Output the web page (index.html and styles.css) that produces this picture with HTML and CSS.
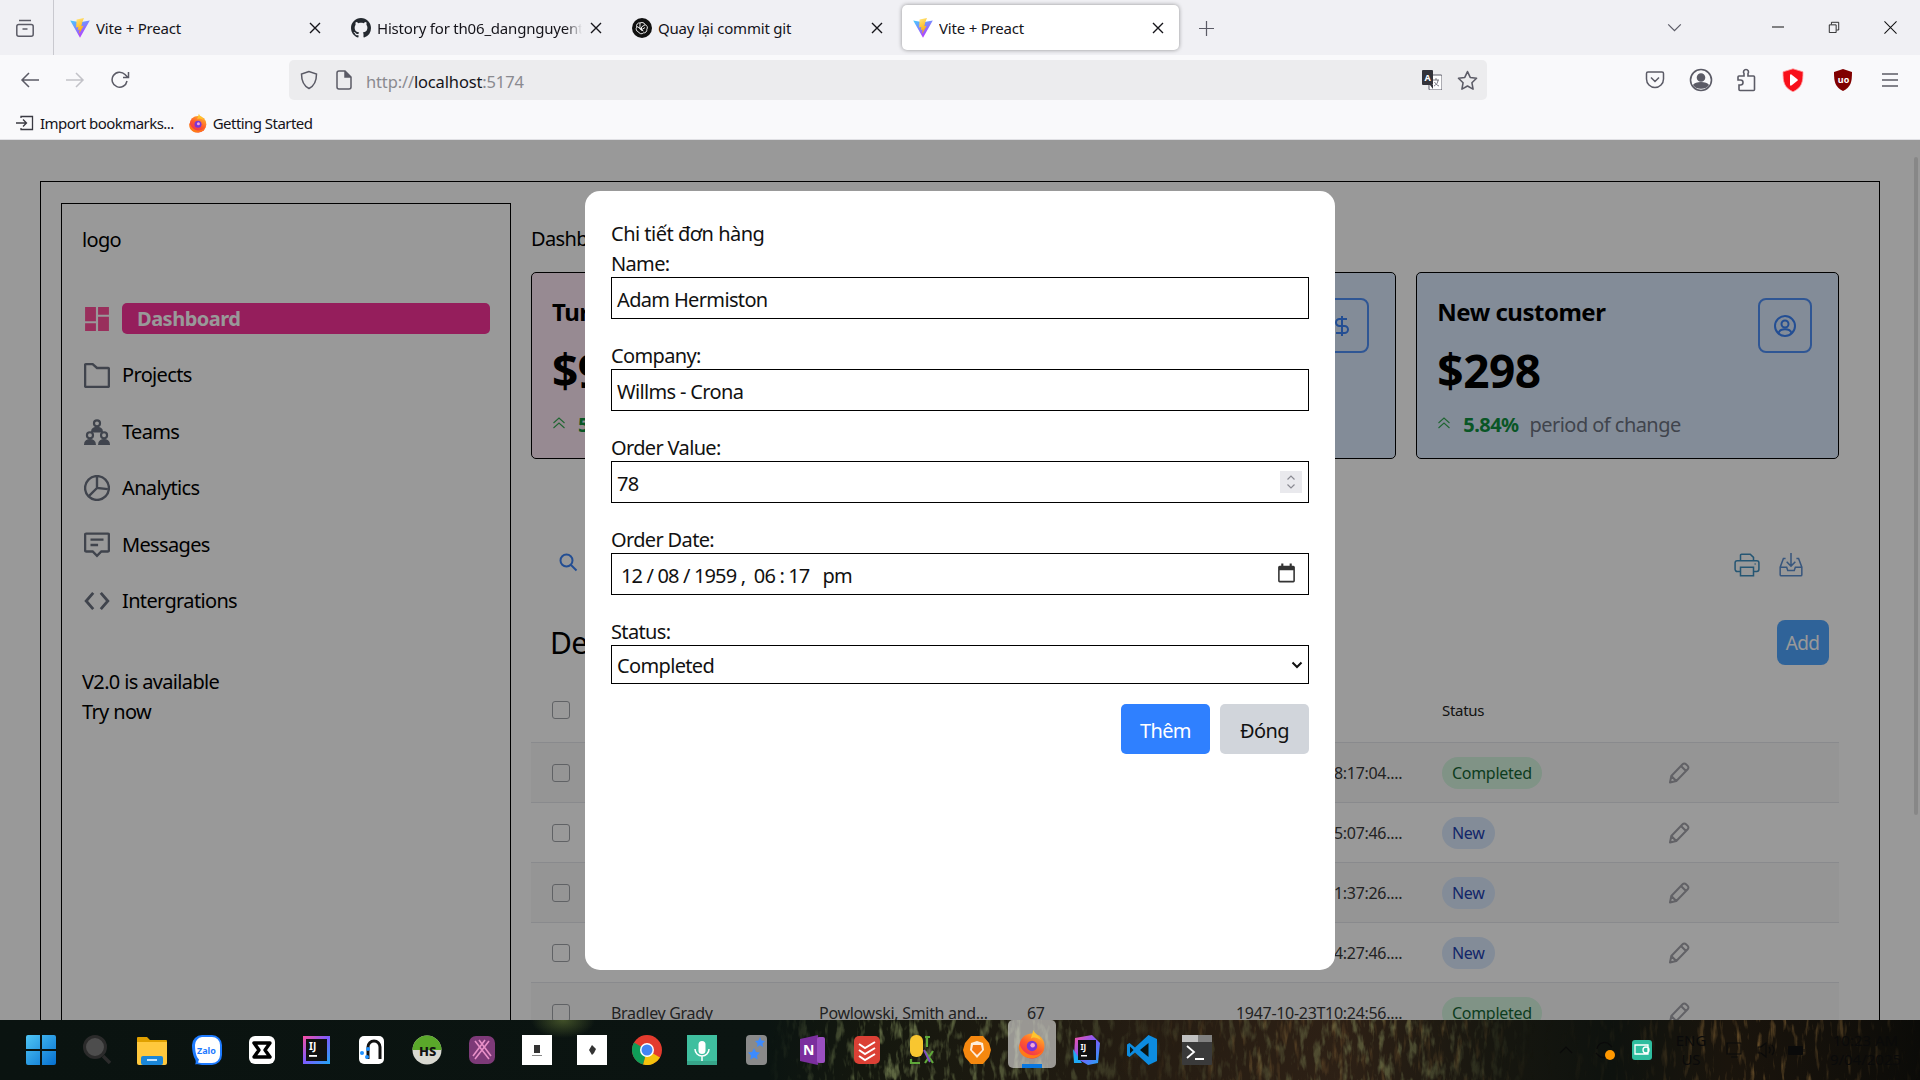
FILE: index.html
```html
<!DOCTYPE html>
<html lang="vi">
<head>
<meta charset="utf-8">
<title>Vite + Preact</title>
<link rel="stylesheet" href="styles.css">
</head>
<body>
<svg class="sprite" aria-hidden="true">
  <defs>
    <linearGradient id="vA" x1="0" y1="0" x2="0.6" y2="1"><stop offset="0" stop-color="#41d1ff"/><stop offset="1" stop-color="#bd34fe"/></linearGradient>
    <linearGradient id="vB" x1="0" y1="0" x2="0.3" y2="1"><stop offset="0" stop-color="#ffea83"/><stop offset="1" stop-color="#ffa800"/></linearGradient>
    <linearGradient id="fx" x1="0.8" y1="0" x2="0.2" y2="1"><stop offset="0" stop-color="#ffbd2e"/><stop offset=".5" stop-color="#ff5a2a"/><stop offset="1" stop-color="#e8206a"/></linearGradient>
    <linearGradient id="win" x1="0" y1="0" x2="1" y2="1"><stop offset="0" stop-color="#4fc6f5"/><stop offset="1" stop-color="#0670d0"/></linearGradient>
    <linearGradient id="ij" x1="0" y1="0" x2="1" y2="1"><stop offset="0" stop-color="#fc4fa0"/><stop offset=".5" stop-color="#7a5cff"/><stop offset="1" stop-color="#1fa9f5"/></linearGradient>
    <symbol id="vite" viewBox="0 0 20 20"><path d="M0.200 2.400 10 19.800 19.800 2.400 10 4.200Z" fill="url(#vA)"/><path d="M14 0 6.600 1.400l-.5 8 2.300-.5-.6 3 2-.4-.8 4.400 4.600-8.200-2.300.5.900-3.600Z" fill="url(#vB)"/></symbol>
    <symbol id="firefox" viewBox="0 0 24 24"><circle cx="12" cy="13.500" r="10" fill="url(#fx)"/><path d="M13 .8c1 3 4.800 4.200 6 8-2.500-2-6-3-8-1 1-3 1.500-5 2-7Z" fill="#ffc42e"/><circle cx="12" cy="13.500" r="4.200" fill="#7a35d8"/><circle cx="12.500" cy="13" r="1.800" fill="#f4a6d8"/><path d="M2 12c2 6 7 9.500 12 9 3-.3 6-2 7.500-5-2 8-13 10-18 4-2-2.500-2.500-5.500-1.500-8Z" fill="#ff7a18"/></symbol>
    <symbol id="pencil" viewBox="0 0 24 24"><path d="M3 21.500l1.300-6.500L15.600 3.200a2.400 2.400 0 0 1 3.400 0l1.700 1.700a2.400 2.400 0 0 1 0 3.400L9.300 20Z M14 5l5 5 M4.300 15l5 5" fill="none" stroke="currentColor" stroke-width="2" stroke-linejoin="round"/></symbol>
    <symbol id="close" viewBox="0 0 12 12"><path d="M1 1l10 10M11 1 1 11" fill="none" stroke="currentColor" stroke-width="1.400"/></symbol>
    <symbol id="dchev" viewBox="0 0 16 16"><path d="M2.500 8 8 3l5.500 5M2.500 13 8 8l5.500 5" fill="none" stroke="currentColor" stroke-width="1.100"/></symbol>
    <filter id="grass" x="0" y="0" width="100%" height="100%"><feTurbulence type="fractalNoise" baseFrequency="0.16 0.035" numOctaves="3" seed="7"/><feColorMatrix values="0 0 0 0 .6  0 0 0 0 .32  0 0 0 0 .08  4 0 0 0 -2.200"/></filter>
    <filter id="grass2" x="0" y="0" width="100%" height="100%"><feTurbulence type="fractalNoise" baseFrequency="0.14 0.05" numOctaves="3" seed="3"/><feColorMatrix values="0 0 0 0 .34  0 0 0 0 .42  0 0 0 0 .16  4 0 0 0 -2"/></filter>
    <linearGradient id="mOrange"><stop offset=".58" stop-color="#000"/><stop offset=".65" stop-color="#3a3a3a"/><stop offset=".76" stop-color="#333"/><stop offset=".8" stop-color="#000"/><stop offset=".86" stop-color="#1a1a1a"/><stop offset=".92" stop-color="#777"/><stop offset=".97" stop-color="#333"/><stop offset="1" stop-color="#0a0a0a"/></linearGradient>
    <linearGradient id="mGreen"><stop offset=".4" stop-color="#000"/><stop offset=".46" stop-color="#888"/><stop offset=".52" stop-color="#666"/><stop offset=".6" stop-color="#1a1a1a"/><stop offset=".72" stop-color="#666"/><stop offset=".76" stop-color="#333"/><stop offset=".8" stop-color="#000"/></linearGradient>
    <mask id="mo"><rect width="1920" height="60" fill="url(#mOrange)"/></mask>
    <mask id="mg"><rect width="1920" height="60" fill="url(#mGreen)"/></mask>
  </defs>
</svg>

<header class="tabbar">
  <div class="view-btn">
    <svg class="i20" viewBox="0 0 20 20" fill="none" stroke="#5b5b66" stroke-width="1.500"><rect x="1.800" y="6.500" width="16.400" height="11.700" rx="2"/><path d="M4 2.500h12M7.500 11h5"/></svg>
  </div>
  <div class="tabs">
    <div class="tab"><svg class="fav"><use href="#vite"/></svg><span class="tab-title">Vite + Preact</span><svg class="tab-x"><use href="#close"/></svg></div>
    <div class="tab"><svg class="fav" viewBox="0 0 16 16"><path fill="#24292f" d="M8 0C3.580 0 0 3.580 0 8c0 3.540 2.290 6.530 5.470 7.590.4.070.55-.17.55-.38 0-.19-.01-.82-.01-1.490-2.010.37-2.530-.49-2.690-.94-.09-.23-.48-.94-.82-1.130-.28-.15-.68-.52-.01-.53.630-.01 1.080.58 1.230.82.720 1.210 1.870.87 2.330.66.070-.52.280-.87.510-1.070-1.780-.2-3.640-.89-3.640-3.950 0-.87.310-1.590.820-2.150-.08-.2-.36-1.020.08-2.120 0 0 .67-.21 2.200.82.640-.18 1.320-.27 2-.27.680 0 1.360.09 2 .27 1.530-1.040 2.200-.82 2.200-.82.440 1.100.160 1.920.080 2.120.510.560.820 1.270.820 2.150 0 3.070-1.870 3.750-3.650 3.950.29.250.54.730.54 1.480 0 1.070-.01 1.930-.01 2.200 0 .21.150.46.550.38A8.013 8.013 0 0 0 16 8c0-4.420-3.580-8-8-8z"/></svg><span class="tab-title tab-fade">History for th06_dangnguyentie</span><svg class="tab-x"><use href="#close"/></svg></div>
    <div class="tab"><svg class="fav" viewBox="0 0 20 20"><circle cx="10" cy="10" r="10" fill="#111"/><path d="M10 4.500a3 3 0 0 1 3 2.200 3 3 0 0 1 1.800 4.700 3 3 0 0 1-3.400 3.500 3 3 0 0 1-4.900-1 3 3 0 0 1-1.700-4.800A3 3 0 0 1 8 4.900Z M8 5l-.1 6 3.500 2 M13 6.800 9.500 9v3.500 M5 8.500l5 3 3-2" fill="none" stroke="#fff" stroke-width=".9"/></svg><span class="tab-title">Quay lại commit git</span><svg class="tab-x"><use href="#close"/></svg></div>
    <div class="tab tab-on"><svg class="fav"><use href="#vite"/></svg><span class="tab-title">Vite + Preact</span><svg class="tab-x"><use href="#close"/></svg></div>
  </div>
  <svg class="plus" viewBox="0 0 16 16"><path d="M8 0v16M0 8h16" stroke="#5b5b66" stroke-width="1.300"/></svg>
  <svg class="all-tabs" viewBox="0 0 16 10"><path d="M1 1.500 8 8.500l7-7" fill="none" stroke="#5b5b66" stroke-width="1.400"/></svg>
  <div class="winctl">
    <svg class="wc" viewBox="0 0 12 12"><path d="M0 6h12" stroke="#111" stroke-width="1"/></svg>
    <svg class="wc" viewBox="0 0 12 14"><path d="M.5 4.500h8v9h-8z M3 4V1.500h8.500v9H9" fill="none" stroke="#111" stroke-width="1"/></svg>
    <svg class="wc" viewBox="0 0 14 14"><path d="M.5.500l13 13M13.500.500l-13 13" stroke="#111" stroke-width="1.100"/></svg>
  </div>
</header>

<nav class="toolbar">
  <div class="nav-group">
    <button class="tool"><svg class="i20" viewBox="0 0 20 20" fill="none" stroke="#5b5b66" stroke-width="1.500"><path d="M19 10H2M9 3l-7 7 7 7"/></svg></button>
    <button class="tool"><svg class="i20" viewBox="0 0 20 20" fill="none" stroke="#c2c2c8" stroke-width="1.500"><path d="M1 10h17M11 3l7 7-7 7"/></svg></button>
    <button class="tool"><svg class="i20 nudge-r" viewBox="0 0 20 20" fill="none" stroke="#5b5b66" stroke-width="1.500"><path d="M16 11a7.500 7.500 0 1 1-2-6.500L17 7.500M17.500 2v5.500H12"/></svg></button>
  </div>
  <div class="urlbar">
    <svg class="u-shield" viewBox="0 0 20 20" fill="none" stroke="#5b5b66" stroke-width="1.500"><path d="M10 1.500 2.500 4c0 7 1.500 11.500 7.500 14.500C16 15.500 17.500 11 17.500 4Z"/></svg>
    <svg class="u-page" viewBox="0 0 16 20" fill="none" stroke="#5b5b66" stroke-width="1.500"><path d="M3 1h6l6 6v10a2 2 0 0 1-2 2H3a2 2 0 0 1-2-2V3a2 2 0 0 1 2-2Z"/><path d="M9 1v6h6" fill="#5b5b66"/></svg>
    <span class="url"><span class="url-dim">http://</span>localhost<span class="url-dim">:5174</span></span>
    <svg class="u-trans" viewBox="0 0 20 20"><rect x="7" y="5" width="13" height="15" rx="1" fill="#fff" stroke="#5b5b66"/><rect x="0" y="0" width="11" height="15" rx="1" fill="#33333a"/><path d="M8 15l3 4v-4z" fill="#33333a"/><text x="2.500" y="11" class="u-a">A</text><path d="M11 10h6M14 8v2M12 16c2-1 4-3 4-6M12.500 12c1 2 3 3.500 4.500 4" fill="none" stroke="#5b5b66" stroke-width=".8"/></svg>
    <svg class="u-star" viewBox="0 0 20 20" fill="none" stroke="#5b5b66" stroke-width="1.500" stroke-linejoin="round"><path d="m10 1.500 2.600 5.600 6 .8-4.400 4.200 1.100 6.100-5.300-3-5.300 3 1.100-6.100L1.400 7.900l6-.8Z"/></svg>
  </div>
  <div class="tool-right">
    <button class="tool"><svg class="i20" viewBox="0 0 20 20" fill="none" stroke="#5b5b66" stroke-width="1.500"><path d="M3 2h14a1.500 1.500 0 0 1 1.500 1.500V9a8.500 8.500 0 0 1-17 0V3.500A1.500 1.500 0 0 1 3 2Z M6 7.500l4 4 4-4"/></svg></button>
    <button class="tool"><svg class="i24" viewBox="0 0 24 24" fill="none" stroke="#5b5b66" stroke-width="1.600"><circle cx="12" cy="12" r="10.500"/><circle cx="12" cy="9.500" r="3.500" fill="#5b5b66"/><path d="M5 17c2-3 12-3 14 0-3 4-11 4-14 0Z" fill="#5b5b66"/></svg></button>
    <button class="tool tool-ext"><svg class="i24" viewBox="0 0 24 24" fill="none" stroke="#5b5b66" stroke-width="1.600"><path d="M12 1.500a2.500 2.500 0 0 1 2 4V8h5.500a1 1 0 0 1 1 1v12.500a1 1 0 0 1-1 1H6a1 1 0 0 1-1-1V17h1.500a2.500 2.500 0 0 0 0-5H4v-3a1 1 0 0 1 1-1h5V5.500a2.500 2.500 0 0 1 2-4Z"/></svg></button>
    <button class="tool"><svg class="i24" viewBox="0 0 24 24"><path d="M12 .8 2 3.800c0 10.500 1 15.700 10 20 9-4.300 10-9.500 10-20Z" fill="#f8101a" stroke="#ff9ea2" stroke-width=".8"/><path d="M9 7.300c0-.8.800-1.200 1.400-.8l6 4.700c.5.400.5 1.200 0 1.600l-6 4.700c-.6.400-1.400 0-1.400-.8Z" fill="#fff"/></svg></button>
    <button class="tool tool-ubo"><svg class="i24" viewBox="0 0 24 24"><path d="M12 1 3 4c0 10 1 15 9 19 8-4 9-9 9-19Z" fill="#800000"/><text x="6.800" y="14.500" class="u-ub">uo</text></svg></button>
    <button class="tool"><svg class="i20" viewBox="0 0 20 20"><path d="M2 4h16M2 10h16M2 16h16" stroke="#5b5b66" stroke-width="1.600"/></svg></button>
  </div>
</nav>

<div class="bookmarks">
  <svg class="bm-ic" viewBox="0 0 18 18" fill="none" stroke="#3a3a42" stroke-width="1.300"><path d="M5 4V2.500h11.500v13H5V14M0 9h10M7 5.500 10.500 9 7 12.500"/></svg>
  <span class="bm-text">Import bookmarks...</span>
  <svg class="bm-fx"><use href="#firefox"/></svg>
  <span class="bm-text">Getting Started</span>
</div>

<div class="viewport">
  <div class="outer">
    <aside class="sidebar">
      <div class="logo">logo</div>
      <ul class="nav">
        <li class="nav-row">
          <span class="nav-ic"><svg class="i26 ic-active" viewBox="0 0 24 24"><path d="M1 1h10v13H1zM13 1h10v7H13zM13 10h10v13H13zM1 16h10v7H1z" fill="currentColor"/></svg></span>
          <span class="nav-pill">Dashboard</span>
        </li>
        <li class="nav-row">
          <span class="nav-ic"><svg class="i26" viewBox="0 0 24 24" fill="none" stroke="currentColor" stroke-width="2.200"><path d="M1 3a1 1 0 0 1 1-1h6l4 3.500h10a1 1 0 0 1 1 1V22a1 1 0 0 1-1 1H2a1 1 0 0 1-1-1Z"/></svg></span>
          <span>Projects</span>
        </li>
        <li class="nav-row">
          <span class="nav-ic"><svg class="i26" viewBox="0 0 24 24" fill="none" stroke="currentColor" stroke-width="2"><circle cx="12" cy="4" r="2.800"/><path d="M7.500 11.500c0-4.500 9-4.500 9 0Z" fill="currentColor"/><circle cx="5.500" cy="15" r="2.800"/><path d="M1 23.500c0-5.500 9-5.500 9 0Z" fill="currentColor"/><circle cx="18.500" cy="15" r="2.800"/><path d="M14 23.500c0-5.500 9-5.500 9 0Z" fill="currentColor"/></svg></span>
          <span>Teams</span>
        </li>
        <li class="nav-row">
          <span class="nav-ic"><svg class="i26" viewBox="0 0 24 24" fill="none" stroke="currentColor" stroke-width="2.200"><circle cx="12" cy="12" r="11"/><path d="M12 1v11l10 1M12 12l-8 8"/></svg></span>
          <span>Analytics</span>
        </li>
        <li class="nav-row">
          <span class="nav-ic"><svg class="i26" viewBox="0 0 24 24" fill="none" stroke="currentColor" stroke-width="2.200"><path d="M2 1.500h20a1 1 0 0 1 1 1V17a1 1 0 0 1-1 1h-6l-4 4-4-4H2a1 1 0 0 1-1-1V2.500a1 1 0 0 1 1-1Z M6 7h12M6 12h7"/></svg></span>
          <span>Messages</span>
        </li>
        <li class="nav-row">
          <span class="nav-ic"><svg class="i26" viewBox="0 0 24 24" fill="none" stroke="currentColor" stroke-width="2.600"><path d="M8.500 4.500 2 12l6.500 7.500M15.500 4.500 22 12l-6.500 7.500"/></svg></span>
          <span>Intergrations</span>
        </li>
      </ul>
      <p class="promo">V2.0 is available<br>Try now</p>
    </aside>

    <main class="main">
      <h2 class="crumb">Dashboard</h2>
      <section class="cards">
        <article class="card card-pink">
          <div class="card-body">
            <h3 class="card-title">Turnover</h3>
            <div class="card-value">$92,405</div>
            <div class="card-delta"><svg class="delta-ic"><use href="#dchev"/></svg><b>5.39%</b><span>period of change</span></div>
          </div>
          <div class="card-box"><svg class="i24" viewBox="0 0 24 24" fill="none" stroke="currentColor" stroke-width="2"><circle cx="9" cy="20" r="1.500"/><circle cx="18" cy="20" r="1.500"/><path d="M2 3h3l3 13h11l2-9H6"/></svg></div>
        </article>
        <article class="card card-blue">
          <div class="card-body">
            <h3 class="card-title">Profit</h3>
            <div class="card-value">$32,218</div>
            <div class="card-delta"><svg class="delta-ic"><use href="#dchev"/></svg><b>5.39%</b><span>period of change</span></div>
          </div>
          <div class="card-box"><svg class="i24" viewBox="0 0 24 24" fill="none" stroke="currentColor" stroke-width="2"><path d="M12 2v20M17 5H9.500a3.500 3.500 0 0 0 0 7h5a3.500 3.500 0 0 1 0 7H6"/></svg></div>
        </article>
        <article class="card card-blue">
          <div class="card-body">
            <h3 class="card-title">New customer</h3>
            <div class="card-value">$298</div>
            <div class="card-delta"><svg class="delta-ic"><use href="#dchev"/></svg><b>5.84%</b><span>period of change</span></div>
          </div>
          <div class="card-box"><svg class="i24" viewBox="0 0 24 24" fill="none" stroke="currentColor" stroke-width="2"><circle cx="12" cy="12" r="10"/><circle cx="12" cy="10" r="3.500"/><path d="M5.500 19c1.500-5 11.500-5 13 0"/></svg></div>
        </article>
      </section>

      <div class="filter-row">
        <svg class="i20 ic-blue ic-search" viewBox="0 0 20 20" fill="none" stroke="currentColor" stroke-width="2"><circle cx="8.500" cy="8.500" r="6"/><path d="m13 13 5.500 5.500"/></svg>
        <div class="filter-actions">
          <svg class="i26 ic-teal" viewBox="0 0 24 24" fill="none" stroke="currentColor" stroke-width="1.400"><path d="M6 8V3a1 1 0 0 1 1-1h8l3 3v3M6 18H3a2 2 0 0 1-2-2v-6a2 2 0 0 1 2-2h18a2 2 0 0 1 2 2v6a2 2 0 0 1-2 2h-3M6 14h12v8H6zM19 11h1"/></svg>
          <svg class="i26 ic-blue2" viewBox="0 0 24 24" fill="none" stroke="currentColor" stroke-width="1.400"><path d="M12 1v12M8 9l4 4 4-4M7 6H5l-3 8v7a1 1 0 0 0 1 1h18a1 1 0 0 0 1-1v-7l-3-8h-2M2 14h6l1 3h6l1-3h6"/></svg>
        </div>
      </div>

      <div class="section-head">
        <h2 class="section-title">Detailed report</h2>
        <button class="add-btn">Add</button>
      </div>

      <div class="table">
        <div class="tr thead"><span><input class="chk" type="checkbox"></span><span>Customer name</span><span>Company</span><span>Order value</span><span>Order date</span><span>Status</span><span></span></div>
        <div class="tr"><span><input class="chk" type="checkbox"></span><span>Adam Hermiston</span><span>Willms - Crona</span><span>78</span><span>1959-12-08T18:17:04....</span><span><em class="badge badge-done">Completed</em></span><svg class="pen"><use href="#pencil"/></svg></div>
        <div class="tr"><span><input class="chk" type="checkbox"></span><span>Ana Kirlin</span><span>Hahn Group</span><span>45</span><span>1982-04-17T15:07:46....</span><span><em class="badge badge-new">New</em></span><svg class="pen"><use href="#pencil"/></svg></div>
        <div class="tr"><span><input class="chk" type="checkbox"></span><span>Lela Beier</span><span>Bode LLC</span><span>92</span><span>2001-09-30T11:37:26....</span><span><em class="badge badge-new">New</em></span><svg class="pen"><use href="#pencil"/></svg></div>
        <div class="tr"><span><input class="chk" type="checkbox"></span><span>Mario Runte</span><span>Kutch Inc</span><span>31</span><span>1975-06-11T04:27:46....</span><span><em class="badge badge-new">New</em></span><svg class="pen"><use href="#pencil"/></svg></div>
        <div class="tr"><span><input class="chk" type="checkbox"></span><span>Bradley Grady</span><span>Powlowski, Smith and...</span><span>67</span><span>1947-10-23T10:24:56....</span><span><em class="badge badge-done">Completed</em></span><svg class="pen"><use href="#pencil"/></svg></div>
      </div>
    </main>
  </div>
  <div class="scroll-thumb"></div>

  <div class="overlay">
    <form class="modal">
      <div class="modal-title">Chi tiết đơn hàng</div>
      <div class="group"><div class="lbl">Name:</div><div class="field">Adam Hermiston</div></div>
      <div class="group"><div class="lbl">Company:</div><div class="field">Willms - Crona</div></div>
      <div class="group"><div class="lbl">Order Value:</div><div class="field field-num">78<span class="spin"><svg viewBox="0 0 12 18" fill="none" stroke="#8a8a92" stroke-width="1.200"><path d="M2.500 6.500 6 3l3.500 3.500M2.500 11.500 6 15l3.500-3.500"/></svg></span></div></div>
      <div class="group"><div class="lbl">Order Date:</div><div class="field field-date"><span class="date-parts">12 / 08 / 1959 ,&nbsp; 06 : 17 &nbsp; pm</span><svg class="cal" viewBox="0 0 20 20"><path d="M2 4a1.500 1.500 0 0 1 1.500-1.500H5V.5h2v2h6V.5h2v2h1.500A1.500 1.500 0 0 1 18 4v13a1.500 1.500 0 0 1-1.500 1.500h-13A1.500 1.500 0 0 1 2 17Z M3.500 7v10h13V7Z" fill="#333" fill-rule="evenodd"/></svg></div></div>
      <div class="group"><div class="lbl">Status:</div><div class="field field-select">Completed<svg class="sel-chev" viewBox="0 0 12 8"><path d="M1.500 1.500 6 6l4.500-4.500" fill="none" stroke="#111" stroke-width="2"/></svg></div></div>
      <div class="actions"><button type="button" class="btn btn-primary">Thêm</button><button type="button" class="btn btn-muted">Đóng</button></div>
    </form>
  </div>
</div>

<footer class="taskbar">
  <svg class="wall" width="1920" height="60" aria-hidden="true"><rect width="1920" height="60" fill="#fff" filter="url(#grass)" mask="url(#mo)"/><rect width="1920" height="60" fill="#fff" filter="url(#grass2)" mask="url(#mg)"/></svg>
  <div class="apps">
    <div class="app app-first"><svg class="app-ic" viewBox="0 0 30 30"><path d="M0 2a2 2 0 0 1 2-2h12v14H0ZM16 0h12a2 2 0 0 1 2 2v12H16ZM0 16h14v14H2a2 2 0 0 1-2-2ZM16 16h14v12a2 2 0 0 1-2 2H16Z" fill="url(#win)"/></svg></div>
    <div class="app"><svg class="app-ic" viewBox="0 0 30 30"><circle cx="13" cy="12" r="10.500" fill="#4d4d4d" stroke="#2b2b2b" stroke-width="3"/><path d="M21 21l7 7" stroke="#2b2b2b" stroke-width="3.500"/></svg></div>
    <div class="app"><svg class="app-ic" viewBox="0 0 30 30"><path d="M0 3a1 1 0 0 1 1-1h9l3 3h16a1 1 0 0 1 1 1v5H0Z" fill="#e0a000"/><path d="M0 7h30v21a2 2 0 0 1-2 2H2a2 2 0 0 1-2-2Z" fill="#ffc83d"/><rect x="4" y="21" width="22" height="9" rx="2" fill="#1a86d8"/><rect x="10" y="24" width="10" height="2" fill="#bfe3ff"/></svg></div>
    <div class="app"><svg class="app-ic" viewBox="0 0 30 30"><path d="M10 0h10a10 10 0 0 1 10 10v10a10 10 0 0 1-10 10H10c-2 0-5-1-7-.5C4 28 4 26 3 24 1 21 0 15 0 10A10 10 0 0 1 10 0Z" fill="#1e7bff"/><path d="M10 2h10a8 8 0 0 1 8 8v10a8 8 0 0 1-8 8H9c-1 0-2-.5-3-.5l1-3C4 22 3 15 3 10a8 8 0 0 1 7-8Z" fill="#fff"/><text x="5" y="19" class="app-t app-zalo">Zalo</text></svg></div>
    <div class="app"><svg class="app-ic" viewBox="0 0 30 30"><rect x="2" y="1" width="26" height="28" rx="6" fill="#fff"/><path d="M7 8h16l-5 7 5 7H7l5-7Z" fill="none" stroke="#000" stroke-width="3.400" stroke-linejoin="round"/></svg></div>
    <div class="app"><svg class="app-ic" viewBox="0 0 30 30"><rect x="1" y="1" width="27" height="28" fill="url(#ij)"/><rect x="4" y="4" width="21" height="22" fill="#111"/><text x="7" y="15" class="app-t app-ij">IJ</text><rect x="7" y="20" width="8" height="1.800" fill="#fff"/></svg></div>
    <div class="app"><svg class="app-ic" viewBox="0 0 30 30"><rect x="2" y="1" width="25" height="28" rx="5" fill="#fff"/><path d="M11 24V12a6 6 0 0 1 12 0v12" fill="none" stroke="#111" stroke-width="3"/><circle cx="5" cy="18" r="2" fill="#1e90ff"/><circle cx="11" cy="14" r="2" fill="#1e90ff"/><circle cx="10" cy="22" r="2" fill="#1e90ff"/></svg></div>
    <div class="app"><svg class="app-ic" viewBox="0 0 30 30"><circle cx="15" cy="15" r="14.500" fill="#d8d8d0"/><path d="M.5 15a14.500 14.500 0 0 1 29 0Z" fill="#5aa82a"/><text x="7" y="21" class="app-t app-hs">HS</text></svg></div>
    <div class="app"><svg class="app-ic" viewBox="0 0 30 30"><rect x="2" y="1" width="26" height="28" rx="7" fill="#7d3a78"/><path d="M8 6l14 18M12 5l12 16M22 6 8 24M18 5 6 21" stroke="#e890c8" stroke-width="1.600"/></svg></div>
    <div class="app"><svg class="app-ic" viewBox="0 0 30 30"><rect width="30" height="30" fill="#fff"/><path d="M12 10h6v8h-6z" fill="#333"/><rect x="10" y="20" width="10" height="1" fill="#888"/></svg></div>
    <div class="app"><svg class="app-ic" viewBox="0 0 30 30"><rect width="30" height="30" fill="#fff"/><path d="M15 10l4 4-2 4-2 2-3-5z" fill="#333"/></svg></div>
    <div class="app"><svg class="app-ic" viewBox="0 0 30 30"><circle cx="15" cy="15" r="15" fill="#e33b2e"/><path d="M15 15 28 22.500A15 15 0 0 1 11 29.500Z" fill="#f4c20d"/><path d="M15 15 11 29.500A15 15 0 0 1 2 7.500Z" fill="#0f9d58"/><circle cx="15" cy="15" r="7" fill="#fff"/><circle cx="15" cy="15" r="5.500" fill="#4285f4"/></svg></div>
    <div class="app"><svg class="app-ic" viewBox="0 0 30 30"><rect x="0" y="0" width="30" height="30" fill="#3fbf9f"/><rect x="11.500" y="6" width="7" height="13" rx="3.500" fill="#fff"/><path d="M8 14a7 7 0 0 0 14 0M15 21v5" fill="none" stroke="#fff" stroke-width="1.500"/><rect y="26" width="30" height="4" fill="#37a58a"/></svg></div>
    <div class="app"><svg class="app-ic" viewBox="0 0 30 30"><rect x="4" y="0" width="21" height="30" rx="4" fill="#8a8a8a"/><path d="M18 2l1.500 3.500 3.500.5-2.500 2.500.5 3.500-3-1.800-3 1.800.5-3.500L13 6l3.500-.5ZM12 13l2 4 4 .5-3 3 .7 4-3.700-2-3.700 2 .7-4-3-3 4-.5Z" fill="#3d8bfd"/></svg></div>
    <div class="app"><svg class="app-ic" viewBox="0 0 30 30"><path d="M3 4l18-4v30L3 26Z" fill="#7b2f9e"/><rect x="20" y="2" width="8" height="26" rx="2" fill="#9a4fc0"/><text x="6" y="20" class="app-t app-n">N</text></svg></div>
    <div class="app"><svg class="app-ic" viewBox="0 0 30 30"><rect x="2" y="1" width="26" height="28" rx="5" fill="#db4035"/><path d="M7 9l6 4 10-6M7 15l6 4 10-6M7 21l6 4 10-6" fill="none" stroke="#fff" stroke-width="2"/></svg></div>
    <div class="app"><svg class="app-ic" viewBox="0 0 30 30"><rect x="3" y="0" width="13" height="22" rx="6" fill="#f8c630"/><path d="M18 2h5M20 2v10M4 24v4h9M18 16l8 12M26 16l-8 12" stroke="#5fa83a" stroke-width="2.200" fill="none"/><path d="M17 15l6 12" stroke="#8050c0" stroke-width="2"/></svg></div>
    <div class="app"><svg class="app-ic" viewBox="0 0 30 30"><path d="M9 1h12l6 7 2 7-2 7-6 7H9l-6-7-2-7 2-7Z" fill="#f5880f"/><path d="M9 8l6-2 6 2 1 7-7 8-7-8Z" fill="#fff" opacity=".85"/><path d="M11 10h8l1 5-5 5-5-5Z" fill="#f5780f"/></svg></div>
    <div class="app app-on"><svg class="app-ic"><use href="#firefox"/></svg></div>
    <div class="app"><svg class="app-ic" viewBox="0 0 30 30"><path d="M3 3 20 0l8 8-2 20-10 2L2 22Z" fill="url(#ij)"/><path d="M1 14 10 28H2Z" fill="#1fa9f5"/><rect x="6" y="5" width="18" height="20" fill="#111"/><text x="8.500" y="15" class="app-t app-ij2">IJ</text><rect x="9" y="20" width="6" height="1.500" fill="#fff"/></svg></div>
    <div class="app"><svg class="app-ic" viewBox="0 0 30 30"><path d="M21.500 0 30 4v22l-8.500 4L8 17.500 2.500 22 0 20.500V9.500L2.500 8 8 12.500Z" fill="#0d8ce0"/><path d="M21.500 8 13 15l8.500 7Z" fill="#0b1512"/><path d="M3 11.500 6.500 15 3 18.500Z" fill="#0b1512"/></svg></div>
    <div class="app"><svg class="app-ic" viewBox="0 0 30 30"><rect x="0" y="0" width="30" height="30" rx="1" fill="#3a3a3a"/><rect width="30" height="7" fill="#c0c0c0"/><rect x="16" width="14" height="7" fill="#808080"/><path d="M5 11l7 6-7 6" fill="none" stroke="#fff" stroke-width="1.800"/><rect x="13" y="23" width="9" height="2" fill="#fff"/></svg></div>
  </div>
  <div class="tray">
    <span class="tray-item"><svg class="i14" viewBox="0 0 14 10"><path d="M1 8l6-6 6 6" fill="none" stroke="#0a0a0a" stroke-width="1.200"/></svg></span>
    <span class="tray-item tray-sync"><svg class="i20" viewBox="0 0 20 20" fill="none" stroke="#0a0a0a" stroke-width="1.200"><path d="M3 9a7.500 7.500 0 0 1 13-4l2 2M17 11a7.500 7.500 0 0 1-13 4l-2-2"/></svg><i class="tray-dot"></i></span>
    <span class="tray-item"><svg class="i20" viewBox="0 0 20 20"><rect width="20" height="20" rx="3" fill="#2ebd9f"/><path d="M3 5h13v9H3z M11 10a3 3 0 1 0 6 0 3 3 0 1 0-6 0" fill="none" stroke="#fff" stroke-width="1.300"/></svg></span>
    <span class="tray-lang">ENG<br>US</span>
    <span class="tray-sys"><svg class="i20" viewBox="0 0 20 20" fill="none" stroke="#0a0a0a" stroke-width="1.100"><path d="M1 3h14v11H1zM5 17h7"/></svg></span>
    <span class="tray-sys"><svg class="i20" viewBox="0 0 20 20" fill="none" stroke="#0a0a0a" stroke-width="1.100"><path d="M2 7h3l5-4v14l-5-4H2zM13 7c1.500 1.500 1.500 4.500 0 6M16 5c2.500 3 2.500 7 0 10"/></svg></span>
    <span class="tray-sys"><svg class="i20" viewBox="0 0 20 20"><rect x="2" y="6" width="15" height="9" rx="1" fill="#0a0a0a"/><path d="M18 9v3" stroke="#0a0a0a"/></svg></span>
    <span class="tray-clock">10:23 AM<br>9/04/2025</span>
  </div>
</footer>
</body>
</html>
```

FILE: styles.css
```css
* { box-sizing: border-box; }
html, body { margin: 0; height: 100%; }
body {
  display: flex;
  flex-direction: column;
  height: 1080px;
  overflow: hidden;
  font-family: "Noto Sans", "Open Sans", sans-serif;
  font-size: 20px;
  letter-spacing: -0.65px;
  color: #000;
  background: #fff;
}
.sprite { position: absolute; width: 0; height: 0; }
button { font: inherit; letter-spacing: inherit; border: 0; background: none; padding: 0; }
svg { display: block; flex: none; }
.i14 { width: 14px; height: 10px; }
.i20 { width: 20px; height: 20px; }
.i24 { width: 24px; height: 24px; }
.i26 { width: 26px; height: 26px; }

/* browser tab strip */
.tabbar { height: 55px; flex: none; display: flex; align-items: center; background: #f0f0f4; }
.view-btn { width: 54px; height: 55px; flex: none; display: flex; align-items: center; padding-left: 15px; border-right: 1px solid #c9c9cf; }
.tabs { display: flex; gap: 4px; margin-left: 5px; }
.tab { width: 277px; height: 45px; display: flex; align-items: center; padding: 0 15px 0 11px; border-radius: 5px; font-size: 15px; letter-spacing: -0.2px; color: #15141a; }
.tab-on { background: #fff; box-shadow: 0 0 4px rgba(0, 0, 0, .4); }
.fav { width: 20px; height: 20px; margin-right: 6px; }
.tab-title { flex: 1; white-space: nowrap; overflow: hidden; }
.tab-fade { -webkit-mask-image: linear-gradient(90deg, #000 92%, transparent); mask-image: linear-gradient(90deg, #000 92%, transparent); }
.tab-x { width: 12px; height: 12px; margin-left: 8px; color: #15141a; }
.plus { width: 15px; height: 15px; margin-left: 20px; margin-top: 2px; }
.all-tabs { width: 15px; height: 9px; margin-left: 452.5px; }
.winctl { display: flex; margin-left: auto; padding-right: 7px; }
.wc { width: 12px; height: 12px; margin: 0 25px 0 19px; }
.winctl .wc:last-child { width: 13px; height: 13px; margin-right: 16px; }

/* toolbar */
.toolbar { height: 50px; flex: none; display: flex; align-items: center; padding-left: 7.5px; background: #f9f9fb; }
.nav-group { display: flex; }
.tool { width: 46px; height: 40px; flex: none; display: flex; align-items: center; justify-content: center; }
.nav-group .tool { width: 45px; }
.nudge-r { margin-left: 2px; }
.tool-ext { padding-right: 3px; }
.tool-ubo { margin-left: 4px; }
.urlbar { width: 1198px; height: 40px; margin-left: 146.5px; flex: none; display: flex; align-items: center; padding: 0 9px 0 10px; background: #ececee; border-radius: 5px; }
.u-shield { width: 20px; height: 20px; }
.u-page { width: 16px; height: 20px; margin-left: 17px; }
.url { font-size: 16.5px; letter-spacing: -0.15px; margin-left: 14px; padding-top: 2px; color: #15141a; flex: 1; }
.url-dim { color: #8a8a90; }
.u-trans { width: 20px; height: 20px; margin-right: 15px; }
.u-a { font-size: 9px; font-weight: 700; fill: #fff; letter-spacing: 0; }
.u-star { width: 21px; height: 21px; }
.tool-right { display: flex; margin-left: 145px; }
.tool-right .tool:last-child { padding-left: 1px; }
.u-ub { font-size: 9px; font-weight: 700; fill: #fff; letter-spacing: 0; }

/* bookmarks */
.bookmarks { height: 35px; flex: none; display: flex; align-items: center; padding: 1px 0 0 16px; gap: 4px; background: #f9f9fb; font-size: 15px; letter-spacing: -0.55px; color: #15141a; border-bottom: 1px solid #e0e0e4; }
.bm-ic { width: 18px; height: 18px; margin-right: 2px; }
.bm-text { margin-right: 10px; white-space: nowrap; }
.bm-fx { width: 20px; height: 20px; margin-right: 1px; }

/* page */
.viewport { flex: 1; min-height: 0; position: relative; overflow: hidden; background: #fff; }
.outer { margin: 41px 0 0 40px; width: 1840px; min-height: 1000px; padding: 21px 40px 21px 20px; border: 1px solid #000; display: flex; gap: 20px; }
.sidebar { width: 450px; flex: none; padding: 21px 20px 0; border: 1px solid #000; line-height: 30px; }
.logo { height: 30px; }
.nav { list-style: none; margin: 48px 0 0; padding: 0; display: flex; flex-direction: column; gap: 25.5px; }
.nav-row { height: 31px; display: flex; align-items: center; gap: 10px; }
.nav-ic { width: 30px; flex: none; display: flex; justify-content: center; color: #6b7280; }
.ic-active { color: #ff4f9a; }
.nav-pill { flex: 1; height: 31px; line-height: 32px; padding-left: 15px; border-radius: 5px; background: #f83299; color: #fff; font-weight: 700; letter-spacing: -0.5px; }
.promo { margin: 50px 0 0; }

.main { flex: 1; min-width: 0; }
.crumb { margin: 21px 0 0; font-size: 20px; font-weight: 400; line-height: 30px; }
.cards { display: grid; grid-template-columns: repeat(3, 1fr); gap: 20px; margin-top: 18px; }
.card { height: 187px; display: flex; padding: 22px 26px 0 20px; border: 1px solid #000; border-radius: 5px; }
.card-pink { background: #fce7f3; }
.card-blue { background: #dbeafe; }
.card-body { flex: 1; min-width: 0; }
.card-title { margin: 0; font-size: 24px; font-weight: 700; line-height: 34px; letter-spacing: -0.5px; }
.card-value { margin-top: 11px; font-size: 46px; font-weight: 700; line-height: 60px; letter-spacing: -0.5px; }
.card-delta { margin-top: 10px; display: flex; align-items: center; height: 28px; font-size: 20px; letter-spacing: -0.55px; color: #6b7280; }
.delta-ic { width: 16px; height: 16px; margin: -2px 11px 0 -1px; color: #34a853; }
.card-delta b { color: #0f8f3f; margin-right: 11px; }
.card-box { width: 54px; height: 55px; margin-top: 3px; flex: none; display: flex; align-items: center; justify-content: center; border: 2px solid #4f8ff7; border-radius: 8px; color: #3b82f6; }

.filter-row { height: 40px; margin-top: 85px; display: flex; align-items: center; justify-content: space-between; padding: 0 35px 0 27px; }
.filter-actions { display: flex; gap: 18px; margin-top: 2px; }
.ic-search { margin-top: -4px; }
.ic-blue { color: #3b82f6; }
.ic-teal { color: #3f8fc0; }
.ic-blue2 { color: #5d8fd0; }
.section-head { margin-top: 36px; height: 45px; display: flex; align-items: center; justify-content: space-between; padding: 0 10.5px 0 19px; }
.section-title { margin: 0; font-size: 30px; font-weight: 400; line-height: 45px; white-space: nowrap; }
.add-btn { width: 52px; height: 45px; border-radius: 8px; background: #4fa6ff; color: #fff; font-size: 19px; }

.table { margin-top: 16px; font-size: 16px; letter-spacing: -0.3px; color: #3a3a3a; }
.tr { height: 60px; display: grid; grid-template-columns: 80px 208px 208px 209px 206px 226px 1fr; align-items: center; border-bottom: 1px solid #e5e7eb; white-space: nowrap; }
.tr:nth-child(even) { background: #f9f9f9; }
.thead { height: 62px; padding-bottom: 3px; color: #222; font-size: 15px; }
.chk { appearance: none; display: block; width: 18px; height: 18px; margin: 0 0 0 21px; background: transparent; border: 1.500px solid #a0a3a8; border-radius: 3px; }
.badge { display: inline-block; height: 32px; line-height: 32px; padding: 0 10px; border-radius: 16px; font-style: normal; font-size: 16px; }
.badge-done { background: #d5f5e0; color: #166534; }
.badge-new { background: #dbeafe; color: #1e40af; }
.pen { width: 24px; height: 24px; margin-left: -1px; color: #a3a3ab; }

.scroll-thumb { position: absolute; right: 2px; top: 17px; width: 4px; height: 658px; border-radius: 2px; background: #e2e2e2; }

/* dialog */
.overlay { position: absolute; inset: 0; display: flex; justify-content: center; align-items: flex-start; padding-top: 51px; background: rgba(0, 0, 0, .4); }
.modal { width: 750px; height: 779px; padding: 27px 26px 0; background: #fff; border-radius: 15px; color: #111; }
.modal-title { line-height: 31px; margin-bottom: 2px; letter-spacing: -0.5px; }
.group + .group { margin-top: 24px; }
.lbl { height: 26px; line-height: 26px; }
.field { height: 42px; display: flex; align-items: center; justify-content: space-between; padding: 2px 5px 0; border: 1px solid #000; }
.field-date { padding-left: 9px; padding-right: 11px; }
.date-parts { white-space: pre; letter-spacing: -0.85px; }
.field-select { height: 39px; }
.spin { width: 22px; height: 22px; padding: 2px 5px; background: #e9e9ed; margin: -2px 1px 0 0; }
.spin svg { width: 12px; height: 18px; }
.cal { width: 21px; height: 21px; margin-top: -3px; }
.sel-chev { width: 12px; height: 8px; margin-top: -2px; }
.actions { margin-top: 20px; display: flex; justify-content: flex-end; gap: 10px; }
.btn { width: 89px; height: 50px; border-radius: 5px; color: #111; padding-top: 2px; }
.btn-primary { background: #2f80ff; color: #fff; }
.btn-muted { background: #d1d5db; }

/* windows taskbar */
.taskbar {
  height: 60px; flex: none; position: relative; display: flex; align-items: center; justify-content: space-between; overflow: hidden;
  background:
    radial-gradient(ellipse 32px 18px at 563px 0, rgba(110, 130, 60, .55), transparent),
    linear-gradient(90deg, #0a1310 0, #0b1411 40%, #14170e 45%, #251c12 60%, #2d2015 70%, #16160f 78%, #0e120e 84%, #1a140c 90%, #120f0a 96%, #0b0b08 100%);
}
.wall { position: absolute; left: 0; top: 0; }
.apps { position: relative; display: flex; padding-left: 14px; }
.app { width: 55px; height: 60px; display: flex; align-items: center; justify-content: center; }
.app-first { margin-left: -1px; margin-right: 1px; }
.app-ic { width: 30px; height: 30px; }
.app-on { position: relative; width: 48px; height: 48px; margin: 0 3.5px; background: rgba(255, 255, 255, .55); border-radius: 5px; }
.app-on::after { content: ""; position: absolute; left: 14px; bottom: 0; width: 20px; height: 4px; background: #0a78e0; }
.app-t { letter-spacing: 0; font-family: "Noto Sans", sans-serif; }
.app-zalo { font-size: 9px; font-weight: 700; fill: #1e7bff; }
.app-ij { font-size: 10px; font-weight: 700; fill: #fff; }
.app-ij2 { font-size: 8px; font-weight: 700; fill: #fff; }
.app-hs { font-size: 13px; font-weight: 800; fill: #111; }
.app-n { font-size: 14px; font-weight: 700; fill: #fff; }
.tray { position: relative; display: flex; align-items: center; color: #0a0a0a; font-size: 15px; letter-spacing: 0; line-height: 19px; text-align: center; }
.tray-item { width: 38px; display: flex; justify-content: center; position: relative; }
.tray-dot { position: absolute; left: 20px; top: 10px; width: 10px; height: 10px; border-radius: 50%; background: #ff9800; }
.tray-lang { width: 60px; }
.tray-sys { width: 30px; display: flex; justify-content: center; }
.tray-clock { width: 109px; }
```
